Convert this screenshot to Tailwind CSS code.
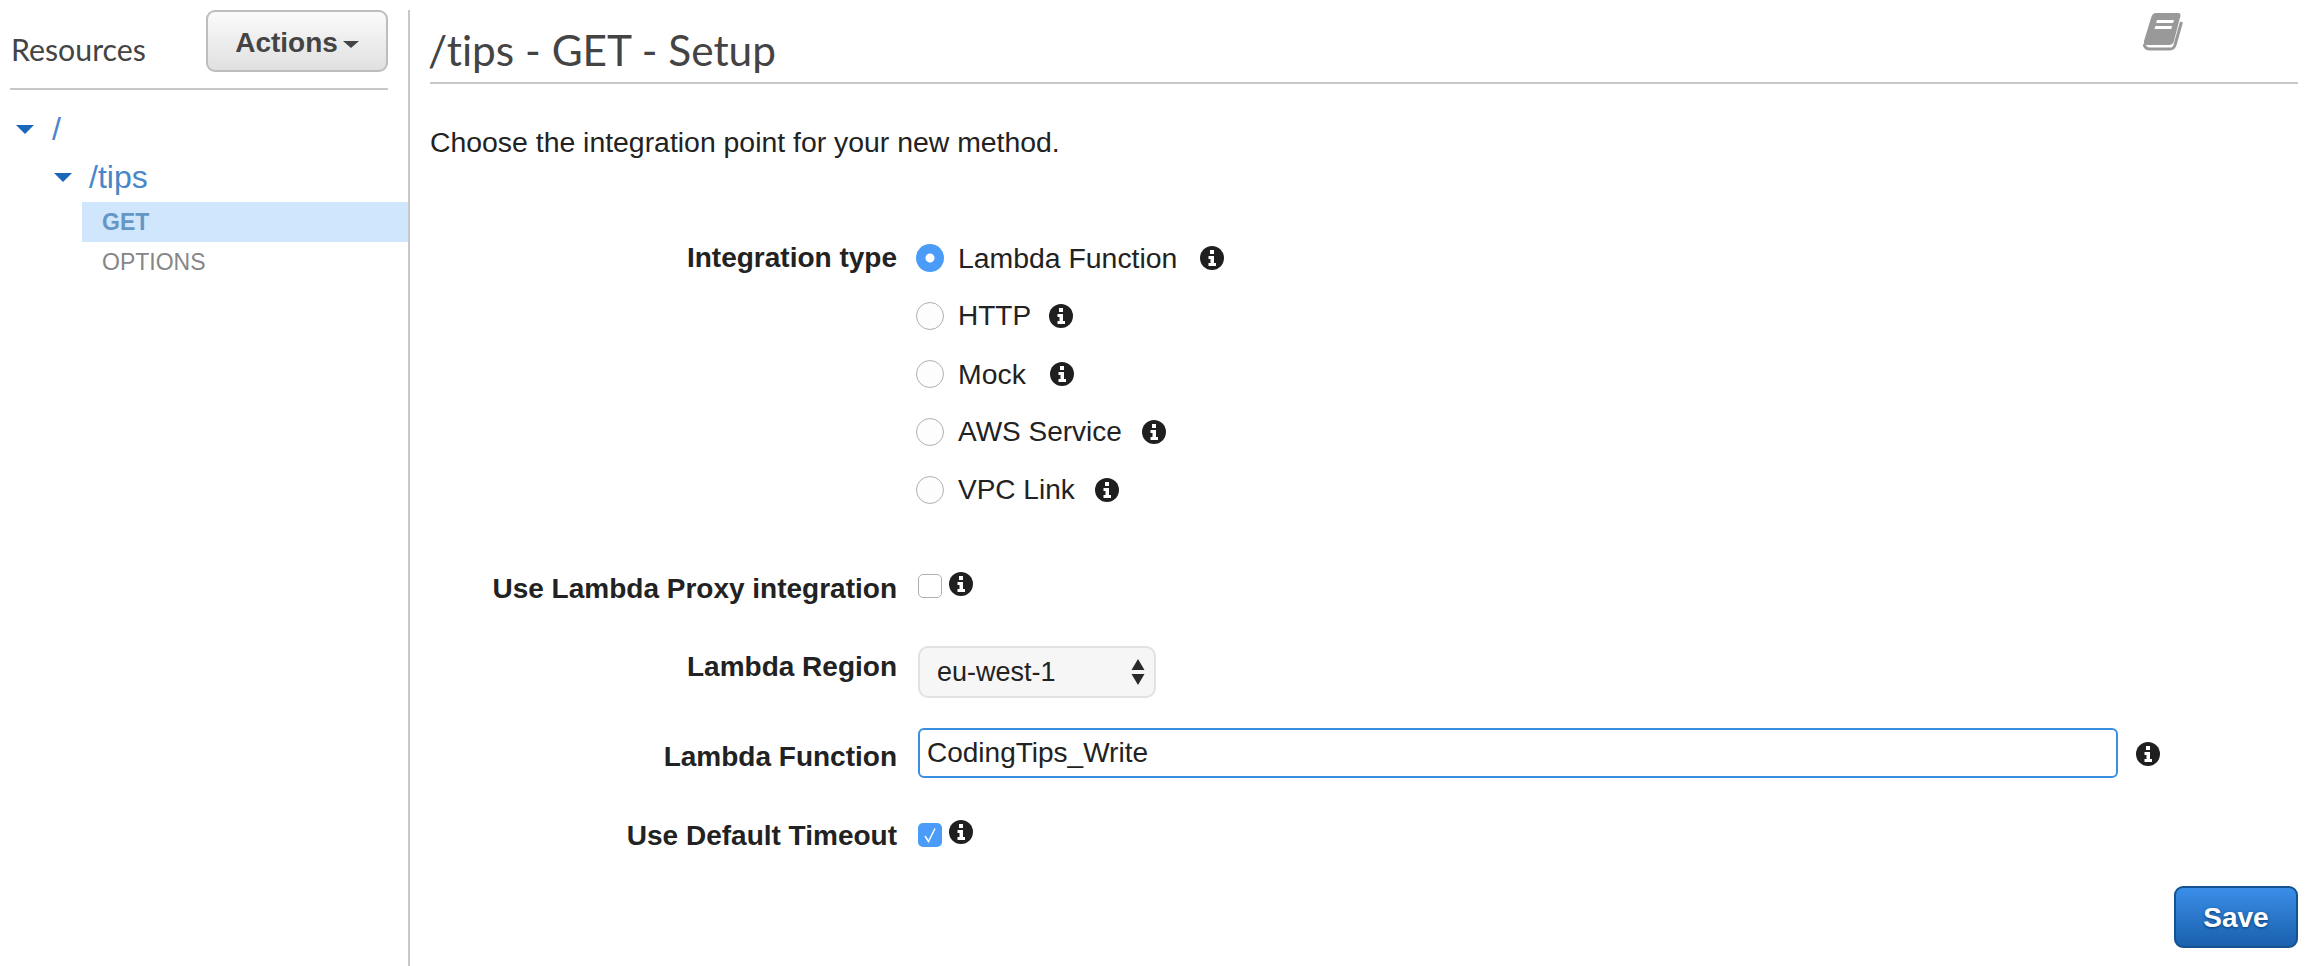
<!DOCTYPE html>
<html>
<head>
<meta charset="utf-8">
<script src="https://cdn.jsdelivr.net/npm/@tailwindcss/browser@4"></script>
</head>
<body class="bg-white">
<div class="flex h-[966px] w-[2310px] overflow-hidden font-['Liberation_Sans',Arial,sans-serif] text-[28px] text-[#222]">
  <!-- Sidebar -->
  <aside class="w-[410px] shrink-0 pt-[10px]">
    <div class="h-[956px] border-r-2 border-[#c8c8c8]">
      <div class="ml-[10px] mr-[20px] h-[80px] flex justify-between border-b-2 border-[#c8c8c8]">
        <span class="pt-[19px] pl-px font-['Lato',sans-serif] text-[30.300px] leading-[40px] text-[#444]">Resources</span>
        <button class="w-[182px] h-[62px] flex items-center justify-center gap-[5px] pt-[3px] rounded-[9px] border-2 border-[#bdbdbd] bg-[linear-gradient(#fbfbfb,#e0e0e0)] font-bold text-[#444] leading-[32px]">Actions<span class="mt-[3px] border-x-[8px] border-t-[7px] border-x-transparent border-t-[#444]"></span></button>
      </div>
      <div class="flex items-center h-[50px] mt-[14px] pl-[16px] text-[32px] text-[#4a86c8]">
        <span class="border-x-[9px] border-t-[9px] border-x-transparent border-t-[#1a66b8]"></span>
        <span class="ml-[18px]">/</span>
      </div>
      <div class="flex items-center h-[40px] mt-[3px] pl-[54px] text-[32px] text-[#4a86c8]">
        <span class="border-x-[9px] border-t-[9px] border-x-transparent border-t-[#1a66b8]"></span>
        <span class="ml-[17px]">/tips</span>
      </div>
      <div class="ml-[82px] mt-[5px] h-[40px] pl-[20px] bg-[#d0e6fd] text-[23px] font-bold leading-[40px] text-[#6596c4]">GET</div>
      <div class="ml-[82px] h-[40px] pl-[20px] text-[23px] leading-[40px] text-[#868686]">OPTIONS</div>
    </div>
  </aside>
  <!-- Main -->
  <main class="w-[1880px] pl-[20px] pr-[0px] shrink-0">
    <div class="w-[1868px] h-[84px] flex justify-between border-b-2 border-[#c8c8c8]">
      <h1 class="pt-[22px] -ml-[2px] font-['Lato',sans-serif] text-[42.400px] leading-[56px] text-[#444] [font-variant-ligatures:none]">/tips - GET - Setup</h1>
      <svg class="mt-[13px] mr-[114px]" width="41" height="38" viewBox="0 0 41 38" fill="none">
        <path d="M13 0H35Q38 0 37.400 3L31 28Q30 32 26 32H4Q0 32 1 28L8 5Q9.500 0 13 0Z" fill="#999"/>
        <path d="M14 7H31L30 10H13.200ZM12.400 13H29L28.300 16H11.500Z" fill="#fff"/>
        <path d="M1 31Q2 36 7 36H27Q31 36 32 32L38.500 9" stroke="#999" stroke-width="3"/>
      </svg>
    </div>
    <p class="mt-[42px] leading-[32px] text-[28.400px]">Choose the integration point for your new method.</p>

    <div class="mt-[71px] flex">
      <div class="w-[467px] text-right font-bold leading-[58px]">Integration type</div>
      <div class="ml-[19px] flex flex-col text-[28.400px]">
        <label class="h-[58px] flex items-center"><input type="radio" name="t" class="appearance-none size-[28px] rounded-full bg-[radial-gradient(circle,#fff_0,#fff_4px,#4a9cf8_5px)]" checked><span class="ml-[14px]">Lambda Function</span><svg class="ml-[23px]" width="24" height="24" viewBox="0 0 24 24"><circle cx="12" cy="12" r="12" fill="#1f1f1f"/><path d="M10 4h4v4h-4zM8.500 10h5.500v7h2v3H8.500v-3h2v-4h-2z" fill="#fff"/></svg></label>
        <label class="h-[58px] flex items-center"><input type="radio" name="t" class="appearance-none size-[28px] rounded-full border border-[#b0b0b0] bg-[#fdfdfd]"><span class="ml-[14px] text-[28px]">HTTP</span><svg class="ml-[18px]" width="24" height="24" viewBox="0 0 24 24"><circle cx="12" cy="12" r="12" fill="#1f1f1f"/><path d="M10 4h4v4h-4zM8.500 10h5.500v7h2v3H8.500v-3h2v-4h-2z" fill="#fff"/></svg></label>
        <label class="h-[58px] flex items-center"><input type="radio" name="t" class="appearance-none size-[28px] rounded-full border border-[#b0b0b0] bg-[#fdfdfd]"><span class="ml-[14px]">Mock</span><svg class="ml-[24px]" width="24" height="24" viewBox="0 0 24 24"><circle cx="12" cy="12" r="12" fill="#1f1f1f"/><path d="M10 4h4v4h-4zM8.500 10h5.500v7h2v3H8.500v-3h2v-4h-2z" fill="#fff"/></svg></label>
        <label class="h-[58px] flex items-center"><input type="radio" name="t" class="appearance-none size-[28px] rounded-full border border-[#b0b0b0] bg-[#fdfdfd]"><span class="ml-[14px] text-[28px]">AWS Service</span><svg class="ml-[20px]" width="24" height="24" viewBox="0 0 24 24"><circle cx="12" cy="12" r="12" fill="#1f1f1f"/><path d="M10 4h4v4h-4zM8.500 10h5.500v7h2v3H8.500v-3h2v-4h-2z" fill="#fff"/></svg></label>
        <label class="h-[58px] flex items-center"><input type="radio" name="t" class="appearance-none size-[28px] rounded-full border border-[#b0b0b0] bg-[#fdfdfd]"><span class="ml-[14px] text-[28px]">VPC Link</span><svg class="ml-[20px]" width="24" height="24" viewBox="0 0 24 24"><circle cx="12" cy="12" r="12" fill="#1f1f1f"/><path d="M10 4h4v4h-4zM8.500 10h5.500v7h2v3H8.500v-3h2v-4h-2z" fill="#fff"/></svg></label>
      </div>
    </div>

    <div class="mt-[53px] flex h-[32px]">
      <div class="w-[467px] pt-px text-right font-bold leading-[32px]">Use Lambda Proxy integration</div>
      <input type="checkbox" class="ml-[21px] mt-[2px] appearance-none size-[24px] rounded-[5px] border border-[#b0b0b0] bg-white">
      <svg class="ml-[7px]" width="24" height="24" viewBox="0 0 24 24"><circle cx="12" cy="12" r="12" fill="#1f1f1f"/><path d="M10 4h4v4h-4zM8.500 10h5.500v7h2v3H8.500v-3h2v-4h-2z" fill="#fff"/></svg>
    </div>

    <div class="mt-[42px] flex h-[52px]">
      <div class="w-[467px] pt-[5px] text-right font-bold leading-[32px]">Lambda Region</div>
      <div class="ml-[21px] w-[238px] h-[52px] flex items-center justify-between pl-[17px] pr-[9px] rounded-[10px] border-2 border-[#e2e2e2] bg-[#f6f6f6] text-[27px]">
        <span>eu-west-1</span>
        <svg width="14" height="26" viewBox="0 0 14 26"><path d="M7 0L13.500 11H.5ZM7 26L.5 15H13.500Z" fill="#2a2a2a"/></svg>
      </div>
    </div>

    <div class="mt-[30px] flex h-[50px]">
      <div class="w-[467px] pt-[13px] text-right font-bold leading-[32px]">Lambda Function</div>
      <input type="text" value="CodingTips_Write" class="ml-[21px] w-[1200px] h-[50px] px-[7px] rounded-[6px] border-2 border-[#3b8fe0] bg-white text-[28px] text-[#222] outline-none">
      <svg class="ml-[18px] mt-[14px]" width="24" height="24" viewBox="0 0 24 24"><circle cx="12" cy="12" r="12" fill="#1f1f1f"/><path d="M10 4h4v4h-4zM8.500 10h5.500v7h2v3H8.500v-3h2v-4h-2z" fill="#fff"/></svg>
    </div>

    <div class="mt-[41px] flex h-[32px]">
      <div class="w-[467px] pt-px text-right font-bold leading-[32px]">Use Default Timeout</div>
      <div class="ml-[21px] mt-[4px] size-[24px] rounded-[5px] bg-[#4a9cf8] flex items-center justify-center">
        <svg width="16" height="18" viewBox="0 0 16 18" fill="none"><path d="M3 10L6.500 15.500L13 2.500" stroke="#fff" stroke-width="1.500"/></svg>
      </div>
      <svg class="ml-[7px] mt-px" width="24" height="24" viewBox="0 0 24 24"><circle cx="12" cy="12" r="12" fill="#1f1f1f"/><path d="M10 4h4v4h-4zM8.500 10h5.500v7h2v3H8.500v-3h2v-4h-2z" fill="#fff"/></svg>
    </div>

    <div class="mt-[35px] w-[1868px] flex justify-end">
      <button class="w-[124px] h-[62px] pt-px rounded-[9px] border-2 border-[#15528f] bg-[linear-gradient(#3a8ee8,#1a60ad)] font-bold text-[28px] text-white [text-shadow:0_1px_3px_#0b3a70]">Save</button>
    </div>
  </main>
</div>
</body>
</html>
